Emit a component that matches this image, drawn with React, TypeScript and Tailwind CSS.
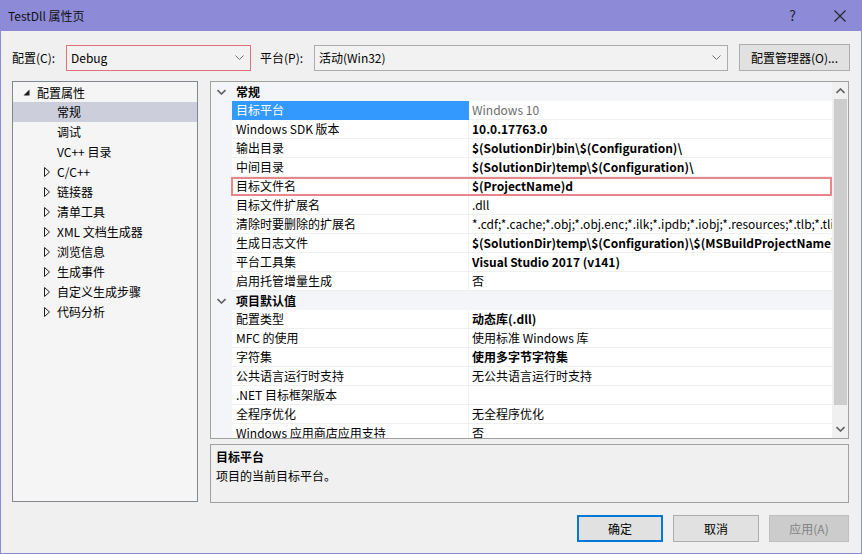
import React from "react";

const font = "font-['Noto_Sans_CJK_SC','Noto_Sans',sans-serif]";

const Chevron = ({ up = false }: { up?: boolean }) => (
  <svg width="9" height="6" viewBox="0 0 9 6" className={up ? "rotate-180" : ""}>
    <polyline points="0.5,1 4.5,5 8.5,1" fill="none" stroke="#606060" strokeWidth="1.6" />
  </svg>
);

const ThinChevron = () => (
  <svg width="9" height="5" viewBox="0 0 9 5">
    <polyline points="0.5,0.5 4.5,4.5 8.5,0.5" fill="none" stroke="#707070" strokeWidth="1" />
  </svg>
);

const treeItems = [
  { label: "常规", expandable: false, selected: true },
  { label: "调试", expandable: false },
  { label: "VC++ 目录", expandable: false },
  { label: "C/C++", expandable: true },
  { label: "链接器", expandable: true },
  { label: "清单工具", expandable: true },
  { label: "XML 文档生成器", expandable: true },
  { label: "浏览信息", expandable: true },
  { label: "生成事件", expandable: true },
  { label: "自定义生成步骤", expandable: true },
  { label: "代码分析", expandable: true },
];

type Row =
  | { cat: string }
  | { name: string; value: string; bold?: boolean; selected?: boolean; marked?: boolean };

const rows: Row[] = [
  { cat: "常规" },
  { name: "目标平台", value: "Windows 10", selected: true },
  { name: "Windows SDK 版本", value: "10.0.17763.0", bold: true },
  { name: "输出目录", value: "$(SolutionDir)bin\\$(Configuration)\\", bold: true },
  { name: "中间目录", value: "$(SolutionDir)temp\\$(Configuration)\\", bold: true },
  { name: "目标文件名", value: "$(ProjectName)d", bold: true, marked: true },
  { name: "目标文件扩展名", value: ".dll" },
  {
    name: "清除时要删除的扩展名",
    value: "*.cdf;*.cache;*.obj;*.obj.enc;*.ilk;*.ipdb;*.iobj;*.resources;*.tlb;*.tli;*.tlh;*.tmp;*.rsp",
  },
  {
    name: "生成日志文件",
    value: "$(SolutionDir)temp\\$(Configuration)\\$(MSBuildProjectName).log",
    bold: true,
  },
  { name: "平台工具集", value: "Visual Studio 2017 (v141)", bold: true },
  { name: "启用托管增量生成", value: "否" },
  { cat: "项目默认值" },
  { name: "配置类型", value: "动态库(.dll)", bold: true },
  { name: "MFC 的使用", value: "使用标准 Windows 库" },
  { name: "字符集", value: "使用多字节字符集", bold: true },
  { name: "公共语言运行时支持", value: "无公共语言运行时支持" },
  { name: ".NET 目标框架版本", value: "" },
  { name: "全程序优化", value: "无全程序优化" },
  { name: "Windows 应用商店应用支持", value: "否" },
];

const App = () => {
  return (
    <div
      className={`${font} w-[862px] h-[554px] flex flex-col bg-[#f0f0f0] border-x border-b border-[#8d8bd8] text-[12px] text-black overflow-hidden`}
    >
      {/* Title bar */}
      <div className="h-[31px] shrink-0 bg-[#8d8bd8] flex items-center pl-[8px] pr-[16px] -mx-px">
        <span className="text-[12px] text-[#111]">TestDll 属性页</span>
        <span className="ml-auto mr-[38px] text-[14px] text-[#222]">?</span>
        <svg width="12" height="12" viewBox="0 0 12 12">
          <path d="M0.5 0.5 L11.5 11.5 M11.5 0.5 L0.5 11.5" stroke="#222" strokeWidth="1.1" />
        </svg>
      </div>

      {/* Config row */}
      <div className="flex items-center mt-[13px] pl-[11px] h-[27px]">
        <span className="w-[54px]">配置(C):</span>
        <div className="w-[185px] h-[26px] border border-[#e0707a] bg-[#f2f2f2] flex items-center pl-[4px] pr-[6px]">
          <span>Debug</span>
          <span className="ml-auto">
            <ThinChevron />
          </span>
        </div>
        <span className="ml-[9px] w-[54px]">平台(P):</span>
        <div className="w-[414px] h-[26px] border border-[#acacac] bg-[#f2f2f2] flex items-center pl-[4px] pr-[6px]">
          <span>活动(Win32)</span>
          <span className="ml-auto">
            <ThinChevron />
          </span>
        </div>
        <div className="ml-[11px] w-[111px] h-[27px] border border-[#adadad] bg-[#e1e1e1] flex items-center justify-center">
          配置管理器(O)...
        </div>
      </div>

      {/* Main area */}
      <div className="flex mt-[10px] pl-[11px] gap-[12px]">
        {/* Tree */}
        <div className="w-[186px] h-[421px] border border-[#828790] bg-[#f5f5f5] pt-px">
          <div className="h-[19px] flex items-center">
            <svg width="7" height="7" viewBox="0 0 7 7" className="ml-[10px] mr-[7px]">
              <polygon points="6.5,0.5 6.5,6.5 0.5,6.5" fill="#1e1e1e" />
            </svg>
            <span>配置属性</span>
          </div>
          {treeItems.map((it) => (
            <div
              key={it.label}
              className={`h-[20px] flex items-center ${it.selected ? "bg-[#cccedb]" : ""}`}
            >
              <span className="w-[44px] flex justify-end pr-[7px]">
                {it.expandable && (
                  <svg width="6" height="10" viewBox="0 0 6 10">
                    <polygon points="0.5,0.5 5.5,5 0.5,9.5" fill="none" stroke="#1e1e1e" strokeWidth="1" />
                  </svg>
                )}
              </span>
              <span>{it.label}</span>
            </div>
          ))}
        </div>

        {/* Right column */}
        <div className="w-[639px] flex flex-col gap-[5px]">
          <div className="h-[358px] border border-[#a0a0a0] bg-white flex overflow-hidden">
            <div className="flex-1 flex flex-col overflow-hidden">
              {rows.map((r, i) =>
                "cat" in r ? (
                  <div key={i} className="h-[19px] shrink-0 flex items-center bg-[#f3f5f9]">
                    <span className="w-[21px] flex justify-center">
                      <Chevron />
                    </span>
                    <span className="font-bold pl-[4px]">{r.cat}</span>
                  </div>
                ) : (
                  <div key={i} className="h-[19px] shrink-0 flex relative">
                    <div className="w-[21px] shrink-0 bg-[#f3f5f9]" />
                    <div
                      className={`w-[237px] shrink-0 flex items-center pl-[4px] border-b border-r whitespace-nowrap overflow-hidden ${
                        r.selected
                          ? "bg-[#3399ff] text-white border-[#3399ff]"
                          : "border-[#f0f0f0]"
                      }`}
                    >
                      {r.name}
                    </div>
                    <div
                      className={`flex-1 flex items-center pl-[3px] border-b border-[#f0f0f0] whitespace-nowrap overflow-hidden ${
                        r.bold ? "font-bold" : ""
                      } ${r.selected ? "text-[#6d6d6d]" : ""}`}
                    >
                      {r.value}
                    </div>
                    {r.marked && (
                      <div className="absolute z-10 left-[20px] right-0 top-0 bottom-0 border-2 border-[#e9868c]" />
                    )}
                  </div>
                )
              )}
            </div>
            {/* Scrollbar */}
            <div className="w-[16px] shrink-0 bg-[#f0f0f0] flex flex-col items-center">
              <div className="h-[17px] flex items-center justify-center">
                <Chevron up />
              </div>
              <div className="w-[13px] h-[306px] bg-[#cdcdcd]" />
              <div className="flex-1" />
              <div className="h-[17px] flex items-center justify-center mb-px">
                <Chevron />
              </div>
            </div>
          </div>

          {/* Description */}
          <div className="h-[59px] border border-[#a0a0a0] bg-[#f0f0f0] px-[5px] pt-[2px] leading-[19px]">
            <div className="font-bold">目标平台</div>
            <div>项目的当前目标平台。</div>
          </div>
        </div>
      </div>

      {/* Buttons */}
      <div className="flex justify-end gap-[10px] mt-[12px] pr-[12px]">
        <div className="w-[86px] h-[27px] border-2 border-[#0078d7] bg-[#e1e1e1] flex items-center justify-center">
          确定
        </div>
        <div className="w-[86px] h-[27px] border border-[#adadad] bg-[#e1e1e1] flex items-center justify-center">
          取消
        </div>
        <div className="w-[80px] h-[27px] border border-[#bfbfbf] bg-[#cccccc] text-[#838383] flex items-center justify-center">
          应用(A)
        </div>
      </div>
    </div>
  );
};

export default App;
